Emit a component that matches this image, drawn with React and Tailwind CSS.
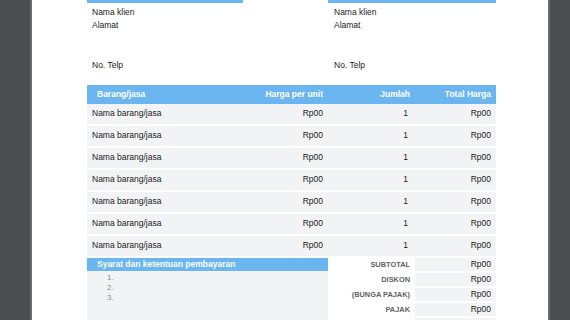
const rows = Array.from({ length: 7 })

const summary = ["SUBTOTAL", "DISKON", "(BUNGA PAJAK)", "PAJAK", ""]

export default function App() {
  return (
    <div className="w-[570px] h-[320px] overflow-hidden flex bg-[#4b4f52] font-['Liberation_Sans',Arial,sans-serif] text-[8.5px] text-[#222]">
      <div className="w-[30px] shrink-0" />
      <div className="w-[2px] shrink-0 bg-[#6a6d70]" />
      <div className="w-[516px] shrink-0 bg-white pl-[55px] pr-[52px]">
        {/* client blocks */}
        <div className="flex justify-between">
          <div className="w-[156px]">
            <div className="h-[3px] bg-[#6bb5f0]" />
            <div className="pt-[3px] pl-[5px] leading-[13px]">
              <p>Nama klien</p>
              <p>Alamat</p>
              <p className="mt-[27px]">No. Telp</p>
            </div>
          </div>
          <div className="w-[168px]">
            <div className="h-[3px] bg-[#6bb5f0]" />
            <div className="pt-[3px] pl-[6px] leading-[13px]">
              <p>Nama klien</p>
              <p>Alamat</p>
              <p className="mt-[27px]">No. Telp</p>
            </div>
          </div>
        </div>

        {/* items table */}
        <div className="mt-[12.5px]">
          <div className="grid grid-cols-[1fr_88px_87px_81px] h-[19px] items-center bg-[#6bb5f0] text-white font-bold pl-[10px] pr-[5px]">
            <span>Barang/jasa</span>
            <span className="text-right">Harga per unit</span>
            <span className="text-right">Jumlah</span>
            <span className="text-right">Total Harga</span>
          </div>
          {rows.map((_, i) => (
            <div
              key={i}
              className="grid grid-cols-[1fr_88px_87px_81px] h-[20px] mb-[2px] items-center bg-[#f2f3f5] pl-[5px] pr-[5px]"
            >
              <span>Nama barang/jasa</span>
              <span className="text-right">Rp00</span>
              <span className="text-right pr-[2px]">1</span>
              <span className="text-right">Rp00</span>
            </div>
          ))}
        </div>

        {/* terms + summary */}
        <div className="flex">
          <div className="w-[241px] h-[70px] bg-[#f2f3f5]">
            <div className="h-[13px] bg-[#6bb5f0] text-white font-bold pl-[10px] leading-[13px]">
              Syarat dan ketentuan pembayaran
            </div>
            <ol className="pl-[20px] pt-[2px] text-[#8a8d91] text-[8px] leading-[10px]">
              <li>1.</li>
              <li>2.</li>
              <li>3.</li>
            </ol>
          </div>
          <div className="flex-1 flex flex-col gap-[2px]">
            {summary.map((label, i) => (
              <div key={i} className="flex h-[13px]">
                <span className="w-[87px] pr-[5px] text-right leading-[13px] text-[7.4px] font-bold text-[#5f6266]">
                  {label}
                </span>
                <span className="flex-1 bg-[#f2f3f5] pr-[5px] text-right leading-[13px]">
                  {label ? "Rp00" : ""}
                </span>
              </div>
            ))}
          </div>
        </div>
      </div>
      <div className="w-[2px] shrink-0 bg-[#6a6d70]" />
      <div className="flex-1" />
    </div>
  )
}
